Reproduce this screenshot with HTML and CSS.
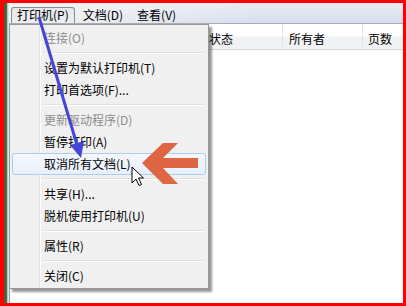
FILE: index.html
```html
<!DOCTYPE html>
<html lang="zh-CN">
<head>
    <meta charset="UTF-8">
    <title>打印机</title>
    <link rel="stylesheet" href="styles.css">
</head>
<body>
    <div class="frame">
        <div class="strip"></div>
        <div class="window">
            <!-- Menu bar -->
            <div class="menubar">
                <span class="top-item open">打印机(P)</span>
                <span class="top-item">文档(D)</span>
                <span class="top-item">查看(V)</span>
            </div>

            <!-- Print queue list -->
            <div class="list">
                <div class="list-head">
                    <div class="col col-name"></div>
                    <div class="col col-status">状态</div>
                    <div class="col col-owner">所有者</div>
                    <div class="col col-pages">页数</div>
                </div>
                <div class="list-body"></div>
            </div>
        </div>

        <!-- Open printer menu -->
        <ul class="dropdown">
            <li class="item disabled">连接(O)</li>
            <li class="sep"></li>
            <li class="item">设置为默认打印机(T)</li>
            <li class="item">打印首选项(F)...</li>
            <li class="sep"></li>
            <li class="item disabled">更新驱动程序(D)</li>
            <li class="item">暂停打印(A)</li>
            <li class="item hover">取消所有文档(L)</li>
            <li class="sep"></li>
            <li class="item">共享(H)...</li>
            <li class="item">脱机使用打印机(U)</li>
            <li class="sep"></li>
            <li class="item">属性(R)</li>
            <li class="sep"></li>
            <li class="item">关闭(C)</li>
        </ul>

        <!-- Annotations drawn over the screenshot -->
        <svg class="marks" width="406" height="306" viewBox="0 0 406 306">
            <line x1="39" y1="17" x2="77" y2="145" stroke="#4545d6" stroke-width="3"/>
            <polygon points="81,158 84,141 70,145" fill="#4545d6"/>
            <polygon points="142,163 163,143 178,143 163,158 198,158 198,168 163,168 178,184 163,184" fill="#df6642"/>
            <path d="M132 167 L132 183 L136 179 L139 185.5 L141.5 184.5 L138.5 178 L143.5 178 Z" fill="#fff" stroke="#000" stroke-width="1" stroke-linejoin="round"/>
        </svg>
    </div>
</body>
</html>
```

FILE: styles.css
```css
* {
    margin: 0;
    padding: 0;
    box-sizing: border-box;
}

body {
    font-family: "Noto Sans CJK SC", "Noto Sans", sans-serif;
    font-size: 12px;
    color: #000;
    background: #fff;
}

.frame {
    position: relative;
    width: 406px;
    height: 306px;
    border: 3px solid #f00;
    border-left-width: 4px;
    display: flex;
    background: #fff;
}

.strip {
    width: 4px;
    background: linear-gradient(to right, #3f5f3d 0, #4d6e4a 3px, #b9c8b7 3px);
}

.window {
    flex: 1;
    display: flex;
    flex-direction: column;
    border-left: 1px solid #dfe4ec;
}

.menubar {
    height: 20px;
    display: flex;
    align-items: flex-end;
    gap: 2px;
    padding: 4px 0 0 2px;
    background: linear-gradient(to right, rgba(244, 244, 245, 1) 0, rgba(244, 244, 245, 0) 65%),
                linear-gradient(#eaedf5, #d6dceb);
}

.top-item {
    height: 16px;
    line-height: 14px;
    padding: 0 5px;
    border: 1px solid transparent;
    border-bottom: none;
}

.top-item.open {
    border: 1px solid #888c92;
    border-bottom: none;
    border-radius: 3px 3px 0 0;
    background: linear-gradient(#e4e6ea, #eeeff1);
}

.list {
    flex: 1;
    display: flex;
    flex-direction: column;
}

.list-head {
    height: 27px;
    display: flex;
    border-top: 1px solid #a9adb3;
    border-bottom: 1px solid #d5d5d5;
    background: linear-gradient(#fff 0, #fff 45%, #f1f2f4 55%, #f1f2f4 100%);
}

.col {
    padding-top: 8px;
    line-height: 14px;
    border-right: 1px solid #e2e4e8;
}

.col-name {
    width: 190px;
}

.col-status {
    width: 84px;
    padding-left: 10px;
}

.col-owner {
    width: 80px;
    padding-left: 6px;
}

.col-pages {
    flex: 1;
    padding-left: 5px;
    border-right: none;
}

.list-body {
    flex: 1;
    background: #fff;
    border-left: 1px solid #a0a0a0;
}

/* the open drop-down menu sits over the list */
.dropdown {
    position: absolute;
    left: 5px;
    top: 21px;
    width: 200px;
    list-style: none;
    padding: 2px 2px 1px 2px;
    border: 1px solid #979797;
    background: linear-gradient(to right, #f0f0f0 29px, #e2e3e3 29px, #e2e3e3 30px, #fff 30px, #fff 31px, #f0f0f0 31px);
    box-shadow: 3px 3px 2px rgba(0, 0, 0, 0.4);
}

.item {
    height: 22px;
    line-height: 20px;
    padding-left: 31px;
    border: 1px solid transparent;
    border-radius: 3px;
}

.item.disabled {
    color: #8d8d8d;
}

.item.hover {
    border-color: #aecbf0;
    background: linear-gradient(#f4f8fd, #e6effb);
}

.sep {
    height: 8px;
    padding: 3px 1px 0 30px;
}

.sep::before {
    content: "";
    display: block;
    border-top: 1px solid #e0e0e0;
    border-bottom: 1px solid #fff;
}

.marks {
    position: absolute;
    left: -4px;
    top: -3px;
    pointer-events: none;
}
```
